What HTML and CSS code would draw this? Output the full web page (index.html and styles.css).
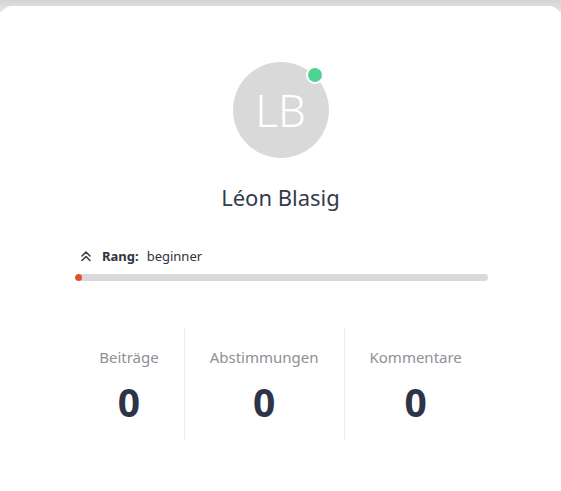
FILE: index.html
```html
<!DOCTYPE html>
<html lang="de">
<head>
<meta charset="utf-8">
<link rel="stylesheet" href="styles.css">
</head>
<body>
<div class="topband"></div>
<main class="card">
  <div class="avatar-wrap">
    <div class="avatar">LB</div>
    <span class="status"></span>
  </div>
  <h1 class="name">Léon Blasig</h1>
  <section class="rank">
    <div class="rank-label">
      <svg class="rank-icon" width="12" height="12" viewBox="0 0 12 12" fill="none" stroke="#3a3f4b" stroke-width="1.6" stroke-linecap="round" stroke-linejoin="round"><path d="M2 6 L6 2 L10 6"/><path d="M2 10.5 L6 6.5 L10 10.5"/></svg>
      <strong>Rang:</strong>
      <span>beginner</span>
    </div>
    <div class="bar"><div class="bar-fill"></div></div>
  </section>
  <section class="stats">
    <div class="stat"><div class="stat-label">Beiträge</div><div class="stat-value">0</div></div>
    <div class="stat"><div class="stat-label">Abstimmungen</div><div class="stat-value">0</div></div>
    <div class="stat"><div class="stat-label">Kommentare</div><div class="stat-value">0</div></div>
  </section>
</main>
</body>
</html>
```
FILE: styles.css
```css
html, body { margin: 0; padding: 0; }
body {
  background: #fff;
  font-family: "Noto Sans", "Open Sans", sans-serif;
  color: #333a4a;
}
.topband {
  height: 12px;
  background: linear-gradient(#d4d4d4, #e6e6e6);
  margin-bottom: -6px;
}
.card {
  position: relative;
  background: #fff;
  border-radius: 12px 12px 0 0;
  height: 485px;
  display: flex;
  flex-direction: column;
  align-items: center;
}
.avatar-wrap {
  position: relative;
  margin-top: 56px;
  width: 96px;
  height: 96px;
}
.avatar {
  width: 96px;
  height: 96px;
  border-radius: 50%;
  background: #d9d9d9;
  color: #fff;
  font-size: 44px;
  font-weight: 300;
  display: flex;
  align-items: center;
  justify-content: center;
}
.status {
  position: absolute;
  left: 73px;
  top: 4px;
  width: 14px;
  height: 14px;
  border-radius: 50%;
  background: #4fd194;
  border: 2px solid #fff;
}
.name {
  margin: 24px 0 0;
  font-size: 22px;
  font-weight: 400;
  line-height: 30px;
  color: #343b4c;
}
.rank {
  width: 413px;
  margin-top: 35px;
  margin-left: 2px;
}
.rank-label {
  display: flex;
  align-items: center;
  font-size: 13px;
  line-height: 18px;
  padding-left: 5px;
  color: #2f3442;
}
.rank-icon { margin-right: 10px; }
.rank-label strong { font-weight: 700; margin-right: 8px; }
.bar {
  margin-top: 9px;
  height: 7px;
  border-radius: 4px;
  background: #d9d9dc;
  overflow: hidden;
}
.bar-fill {
  width: 7px;
  height: 7px;
  border-radius: 50%;
  background: #e4502a;
}
.stats {
  display: flex;
  margin-top: 48px;
}
.stat {
  padding: 18px 25px 16px;
  display: flex;
  flex-direction: column;
  align-items: center;
  border-left: 1px solid #ececec;
}
.stat:first-child { border-left: none; }
.stat-label {
  font-size: 15px;
  line-height: 20px;
  color: #8f8f96;
}
.stat-value {
  margin-top: 13px;
  font-size: 39px;
  font-weight: 700;
  line-height: 44px;
  color: #2e3447;
}
```
